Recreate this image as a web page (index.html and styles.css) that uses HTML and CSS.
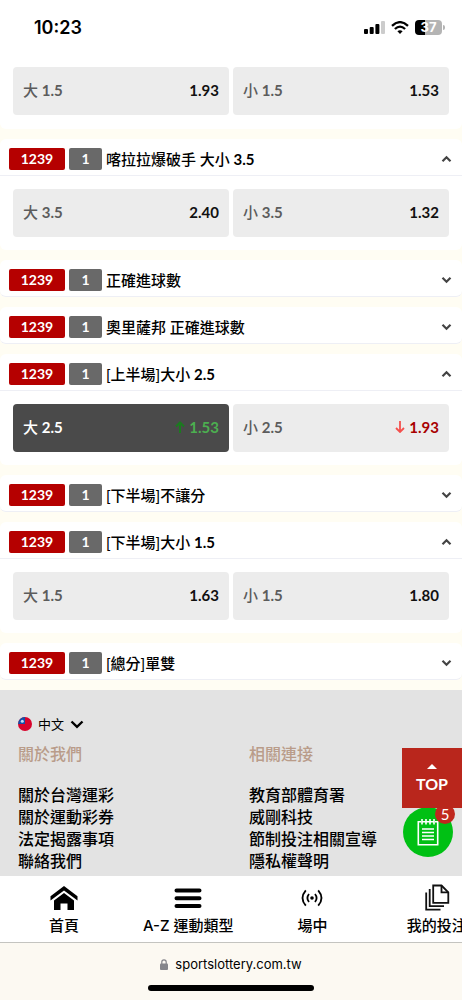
FILE: index.html
```html
<!DOCTYPE html>
<html lang="zh-Hant">
<head>
<meta charset="utf-8">
<meta name="viewport" content="width=device-width, initial-scale=1">
<title>台灣運彩</title>
<link rel="stylesheet" href="styles.css">
</head>
<body>
<svg class="defs" aria-hidden="true">
  <symbol id="chevron" viewBox="0 0 10 8"><path d="M1 1.8 5 5.8 9 1.8" fill="none" stroke="currentColor" stroke-width="2.2"/></symbol>
</svg>

<div class="status">
  <time class="clock">10:23</time>
  <div class="indicators">
    <svg class="signal" viewBox="0 0 21 13" aria-hidden="true"><rect x="0" y="8" width="4" height="5" rx="1"/><rect x="5.7" y="6" width="4" height="7" rx="1"/><rect x="11.4" y="3" width="4" height="10" rx="1"/><rect x="17" y="0" width="4" height="13" rx="1" fill="#ccc"/></svg>
    <svg class="wifi" viewBox="0 0 18 13" aria-hidden="true"><g fill="none" stroke="#000" stroke-width="2.3"><path d="M1 4.9Q9-2.6 17 4.9"/><path d="M3.9 8Q9 3.2 14.1 8"/></g><path d="M6.4 10.3Q9 8.2 11.6 10.3L9 13Z"/></svg>
    <span class="battery"><span class="level">37</span></span>
  </div>
</div>

<main class="page">
  <section class="card first">
    <div class="options">
      <button class="option"><span>大 <span class="num">1.5</span></span><b>1.93</b></button>
      <button class="option"><span>小 <span class="num">1.5</span></span><b>1.53</b></button>
    </div>
  </section>

  <section class="card">
    <button class="head" aria-expanded="true"><span class="code">1239</span><span class="count">1</span><span class="title">喀拉拉爆破手 大小 <span class="num">3.5</span></span><svg class="chev up" aria-hidden="true"><use href="#chevron"/></svg></button>
    <div class="options">
      <button class="option"><span>大 <span class="num">3.5</span></span><b>2.40</b></button>
      <button class="option"><span>小 <span class="num">3.5</span></span><b>1.32</b></button>
    </div>
  </section>

  <section class="card">
    <button class="head" aria-expanded="false"><span class="code">1239</span><span class="count">1</span><span class="title">正確進球數</span><svg class="chev" aria-hidden="true"><use href="#chevron"/></svg></button>
  </section>

  <section class="card">
    <button class="head" aria-expanded="false"><span class="code">1239</span><span class="count">1</span><span class="title">奧里薩邦 正確進球數</span><svg class="chev" aria-hidden="true"><use href="#chevron"/></svg></button>
  </section>

  <section class="card">
    <button class="head" aria-expanded="true"><span class="code">1239</span><span class="count">1</span><span class="title">[上半場]大小 <span class="num">2.5</span></span><svg class="chev up" aria-hidden="true"><use href="#chevron"/></svg></button>
    <div class="options">
      <button class="option selected"><span>大 <span class="num">2.5</span></span><b class="rise"><svg class="arrow" viewBox="0 0 10 12" aria-hidden="true"><path d="M5 12V1.5M1 5.5 5 1.5 9 5.5" fill="none" stroke="#1b7a1f" stroke-width="2"/></svg>1.53</b></button>
      <button class="option"><span>小 <span class="num">2.5</span></span><b class="fall"><svg class="arrow" viewBox="0 0 10 12" aria-hidden="true"><path d="M5 0V11M1 7 5 11 9 7" fill="none" stroke="#f4504d" stroke-width="1.8"/></svg>1.93</b></button>
    </div>
  </section>

  <section class="card">
    <button class="head" aria-expanded="false"><span class="code">1239</span><span class="count">1</span><span class="title">[下半場]不讓分</span><svg class="chev" aria-hidden="true"><use href="#chevron"/></svg></button>
  </section>

  <section class="card">
    <button class="head" aria-expanded="true"><span class="code">1239</span><span class="count">1</span><span class="title">[下半場]大小 <span class="num">1.5</span></span><svg class="chev up" aria-hidden="true"><use href="#chevron"/></svg></button>
    <div class="options">
      <button class="option"><span>大 <span class="num">1.5</span></span><b>1.63</b></button>
      <button class="option"><span>小 <span class="num">1.5</span></span><b>1.80</b></button>
    </div>
  </section>

  <section class="card">
    <button class="head" aria-expanded="false"><span class="code">1239</span><span class="count">1</span><span class="title">[總分]單雙</span><svg class="chev" aria-hidden="true"><use href="#chevron"/></svg></button>
  </section>

  <footer class="footer">
    <button class="language">
      <svg class="flag" viewBox="0 0 14 14" aria-hidden="true"><circle cx="7" cy="7" r="7" fill="#d8032c"/><path d="M7 0A7 7 0 0 0 0 7H7Z" fill="#1450a8"/><circle cx="4.3" cy="4.2" r="1.5" fill="#c5dcf5"/></svg>
      中文
      <svg class="lang-chev" viewBox="0 0 14 9" aria-hidden="true"><path d="M1.5 1.5 7 6.8 12.5 1.5" fill="none" stroke="#000" stroke-width="2.4"/></svg>
    </button>
    <div class="columns">
      <nav class="links">
        <h2>關於我們</h2>
        <a href="#">關於台灣運彩</a>
        <a href="#">關於運動彩券</a>
        <a href="#">法定揭露事項</a>
        <a href="#">聯絡我們</a>
      </nav>
      <nav class="links">
        <h2>相關連接</h2>
        <a href="#">教育部體育署</a>
        <a href="#">威剛科技</a>
        <a href="#">節制投注相關宣導</a>
        <a href="#">隱私權聲明</a>
      </nav>
    </div>
  </footer>

  <button class="slip" aria-label="投注單 5">
    <svg class="slip-icon" viewBox="0 0 22 28" aria-hidden="true"><g fill="none" stroke="#fff" stroke-width="1.6"><path d="M4 3.8H1.3V26.7H20.7V3.8H18M5 1V6.5M9 1V6.5M13 1V6.5M17 1V6.5M5 3.8H17M5 11H17M5 14.5H17M5 18H17M5 21.5H17"/></g></svg>
    <span class="badge">5</span>
  </button>
  <button class="top"><svg class="caret" viewBox="0 0 10 5" aria-hidden="true"><path d="M0 5 5 0 10 5Z" fill="#fff"/></svg>TOP</button>
</main>

<nav class="tabs">
  <a href="#" class="tab"><svg class="tab-icon" viewBox="0 0 28 28" aria-hidden="true"><path d="M14 2 .5 12.2V16.6L14 6.4 27.5 16.6V12.2Z"/><path d="M14 9 4 16.5V26H10.5V19.5H17.5V26H24V16.5Z"/></svg>首頁</a>
  <a href="#" class="tab"><svg class="tab-icon" viewBox="0 0 28 28" aria-hidden="true"><path d="M2.5 6.5H25.5M2.5 14.3H25.5M2.5 22H25.5" stroke="#000" stroke-width="4" stroke-linecap="round"/></svg>A-Z 運動類型</a>
  <a href="#" class="tab"><svg class="tab-icon" viewBox="0 0 28 28" aria-hidden="true"><circle cx="14" cy="14" r="1.8"/><g fill="none" stroke="#000" stroke-width="1.8"><path d="M11 10Q7.8 14 11 18M17 10Q20.2 14 17 18M7.8 6.3Q1.2 14 7.8 21.7M20.2 6.3Q26.8 14 20.2 21.7"/></g></svg>場中</a>
  <a href="#" class="tab"><svg class="tab-icon" viewBox="0 0 28 28" aria-hidden="true"><g fill="none" stroke="#111" stroke-width="1.8"><path d="M10.2 1.5H18.5L25.3 8.3V18.8H10.2Z"/><path d="M18.5 1.5V8.3H25.3M6.7 5V22.2H21M3.2 8.5V25.7H17.5"/></g></svg>我的投注</a>
</nav>

<div class="browser">
  <div class="address"><svg class="lock" viewBox="0 0 8 11" aria-hidden="true"><rect y="4.5" width="8" height="6.5" rx="1" fill="#85858a"/><path d="M1.8 5V3a2.2 2.2 0 0 1 4.4 0V5" fill="none" stroke="#85858a" stroke-width="1.2"/></svg>sportslottery.com.tw</div>
  <div class="home"></div>
</div>
</body>
</html>
```
FILE: styles.css
```css
* { box-sizing: border-box; }
body {
  margin: 0;
  height: 100vh;
  display: flex;
  flex-direction: column;
  overflow: hidden;
  background: #fff;
  color: #000;
  font-family: Lato, "Noto Sans CJK TC", sans-serif;
  font-size: 15px;
}
button {
  border: 0;
  margin: 0;
  padding: 0;
  background: none;
  color: inherit;
  font: inherit;
}
a { color: inherit; text-decoration: none; }
svg { display: block; flex: none; }
.defs { position: absolute; width: 0; height: 0; }

.status {
  flex: none;
  height: 55px;
  padding: 0 20px 0 34px;
  display: flex;
  align-items: center;
  justify-content: space-between;
}
.clock { font: 600 18px/22px Inter, sans-serif; }
.indicators { display: flex; align-items: center; gap: 6px; }
.signal { width: 21px; height: 13px; }
.wifi { width: 18px; height: 13px; }
.battery {
  position: relative;
  width: 27px;
  height: 15px;
  border-radius: 4px;
  background: linear-gradient(90deg, #000 37%, #b4b4b4 37%);
  color: #fff;
  font: 700 13px/15px Inter, sans-serif;
  text-align: center;
}
.battery::after {
  content: "";
  position: absolute;
  left: 100%;
  top: 5px;
  width: 2px;
  height: 5px;
  margin-left: 1px;
  border-radius: 0 2px 2px 0;
  background: #b4b4b4;
}

.page {
  position: relative;
  flex: 1;
  min-height: 0;
  overflow: hidden;
  display: flex;
  flex-direction: column;
  gap: 10px;
  background: #fffdf3;
}
.card { flex: none; border-radius: 6px; background: #fff; }
.first { border-radius: 0 0 6px 6px; }
.head {
  width: 100%;
  height: 37px;
  padding: 3px 10px 0 9px;
  display: flex;
  align-items: center;
  gap: 4px;
  border-bottom: 1px solid #eeeff5;
  border-radius: 6px;
  text-align: left;
}
.head[aria-expanded="true"] { border-radius: 6px 6px 0 0; }
.code, .count {
  height: 22px;
  border-radius: 2px;
  color: #fff;
  font-size: 14px;
  font-weight: 700;
  line-height: 22px;
  text-align: center;
}
.code { width: 56px; background: #b50000; }
.count { width: 33px; background: #696969; }
.title { flex: 1; font-weight: 500; line-height: 22px; }
.num { font-weight: 700; }
.chev { width: 11px; height: 8px; color: #444; }
.up { transform: rotate(180deg); }

.options {
  padding: 13px;
  display: grid;
  grid-template-columns: 1fr 1fr;
  gap: 4px;
}
.first .options { padding: 12px 13px 14px; }
.option {
  height: 48px;
  padding: 0 10px 2px;
  display: flex;
  align-items: baseline;
  justify-content: space-between;
  border-radius: 4px;
  background: #ececec;
  color: #5c5c5c;
  font-weight: 500;
  line-height: 46px;
}
.option b { color: #111; font-weight: 700; }
.option.selected { background: #4a4a4a; color: #fff; }
.option .rise { color: #4caf50; }
.option .fall { color: #a80000; }
.arrow { display: inline-block; width: 10px; height: 12px; margin-right: 4px; }

.footer {
  flex: 1 0 auto;
  padding: 22px 18px 0;
  background: #e3e3e3;
}
.language { height: 24px; display: flex; align-items: center; gap: 6px; font-size: 13px; line-height: 20px; }
.flag { width: 14px; height: 14px; }
.lang-chev { width: 14px; height: 9px; }
.columns { display: grid; grid-template-columns: 1fr 1fr; gap: 36px; }
.links { display: flex; flex-direction: column; font-size: 16px; line-height: 22px; font-weight: 500; white-space: nowrap; }
.links h2 { margin: 7px 0 19px; color: #b99c8a; font-size: 16px; font-weight: 500; line-height: 22px; }

.top {
  position: absolute;
  right: 0;
  bottom: 68px;
  width: 60px;
  height: 60px;
  display: flex;
  flex-direction: column;
  align-items: center;
  justify-content: center;
  background: #b9261c;
  color: #fff;
  font-size: 16px;
  font-weight: 700;
  line-height: 22px;
}
.caret { width: 10px; height: 5px; margin: 3px 0 4px; }
.slip {
  position: absolute;
  right: 9px;
  bottom: 19px;
  width: 50px;
  height: 50px;
  display: flex;
  align-items: center;
  justify-content: center;
  border-radius: 50%;
  background: #00c014;
}
.slip-icon { width: 22px; height: 28px; }
.badge {
  position: absolute;
  top: -3px;
  right: -2px;
  width: 20px;
  height: 20px;
  border-radius: 50%;
  background: #c0281e;
  color: #fff;
  font-size: 15px;
  line-height: 20px;
}

.tabs {
  flex: none;
  height: 67px;
  padding-left: 2px;
  display: flex;
  overflow: hidden;
  border-bottom: 1px solid #c4c4c0;
}
.tab {
  flex: 0 0 27%;
  padding-top: 8px;
  display: flex;
  flex-direction: column;
  align-items: center;
  gap: 3px;
  font: 500 15px/22px Inter, "Noto Sans CJK TC", sans-serif;
  white-space: nowrap;
}
.tab-icon { width: 28px; height: 28px; }

.browser {
  flex: none;
  height: 57px;
  padding-top: 11px;
  display: flex;
  flex-direction: column;
  align-items: center;
  gap: 11px;
  background: #fcf9f2;
}
.address { display: flex; align-items: center; gap: 7px; font: 400 13px/20px Inter, sans-serif; }
.lock { width: 8px; height: 11px; }
.home { width: 36%; height: 6px; border-radius: 3px; background: #000; }
```
